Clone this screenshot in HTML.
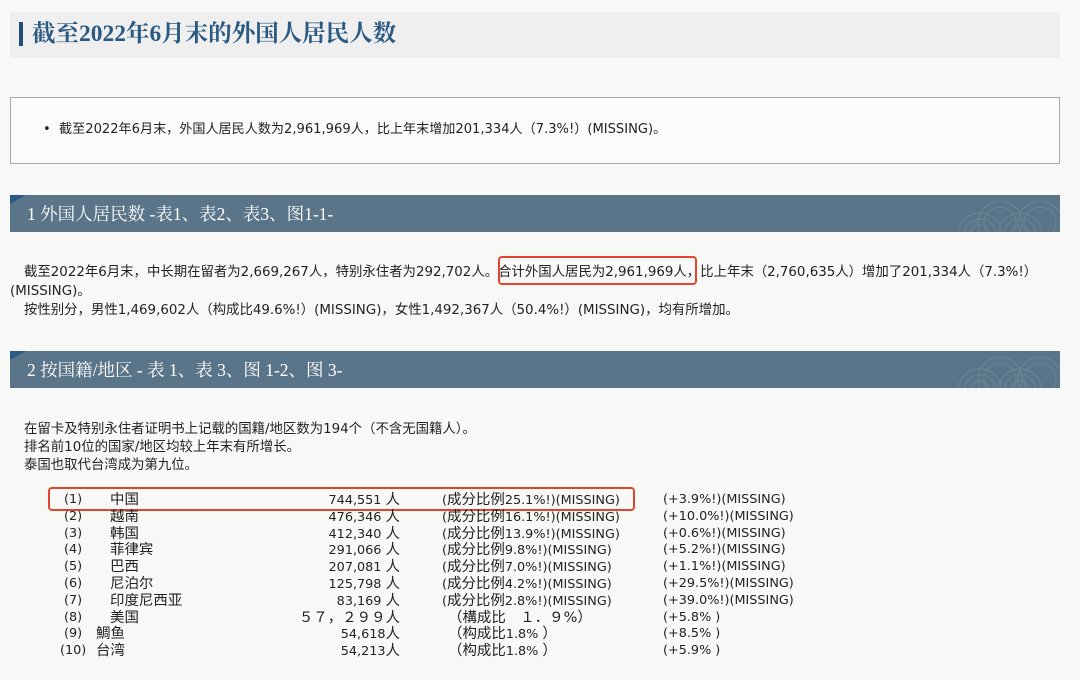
<!DOCTYPE html>
<html><head><meta charset="utf-8"><style>
*{margin:0;padding:0;box-sizing:border-box}
body{width:1080px;height:680px;background:#f8f8f7;position:relative;overflow:hidden;font-family:"DejaVu Sans","Noto Sans CJK SC",sans-serif;color:#222;font-size:12px}
.a{position:absolute;white-space:nowrap}
.title{left:10px;top:12px;width:1050px;height:46px;background:#efefef}
.title .bar{position:absolute;left:9px;top:10px;width:4px;height:24px;background:#1f4e79}
.title .t{position:absolute;left:22px;top:7px;font-family:"Liberation Serif","Noto Serif CJK SC",serif;font-size:23.5px;line-height:30px;color:#2a5a82;font-weight:bold}
.box{left:10px;top:97px;width:1050px;height:67px;border:1px solid #a8a8a8;background:#fbfbfb}
.sec{left:10px;width:1050px;height:37px;background:#5a7589;color:#fff;font-family:"Liberation Serif","Noto Serif CJK SC",serif;font-size:17.5px;line-height:22px;padding:8px 0 0 17px;overflow:hidden}
.sec:before{content:"";position:absolute;left:0;top:0;border-top:9px solid #2c5a85;border-right:16px solid transparent}
.p{font-size:13.4px;line-height:18px}
.red{position:absolute;border:2px solid #e0452f;border-radius:4px}
.r{position:absolute;font-size:12.8px;line-height:16px;white-space:nowrap}
i{font-style:normal;font-size:1.13em}
</style></head><body>
<div class="a title"><div class="bar"></div><div class="t">截至2022年6月末的外国人居民人数</div></div>
<div class="a box"></div>
<div class="a" style="left:43px;top:121px;font-size:13.1px;line-height:18px">•&nbsp;&nbsp;截至2022年6月末，外国人居民人数为2,961,969人，比上年末增加201,334人（7.3%!）(MISSING)。</div>

<div class="a sec" style="top:195px">1 外国人居民数 -表1、表2、表3、图1-1-
<svg style="position:absolute;right:0;top:0" width="110" height="37"><g fill="none" stroke="#6b8598" stroke-width="1"><circle cx="30" cy="40" r="22"/><circle cx="30" cy="40" r="16"/><circle cx="30" cy="40" r="10"/><circle cx="70" cy="40" r="22"/><circle cx="70" cy="40" r="16"/><circle cx="70" cy="40" r="10"/><circle cx="50" cy="28" r="22"/><circle cx="50" cy="28" r="16"/><circle cx="90" cy="28" r="22"/><circle cx="90" cy="28" r="16"/></g></svg></div>
<div class="a p" style="left:24px;top:264px">截至2022年6月末，中长期在留者为2,669,267人，特别永住者为292,702人。合计外国人居民为2,961,969人，比上年末（2,760,635人）增加了201,334人（7.3%!）</div>
<div class="a p" style="left:10px;top:283px">(MISSING)。</div>
<div class="a p" style="left:24px;top:302px">按性别分，男性1,469,602人（构成比49.6%!）(MISSING)，女性1,492,367人（50.4%!）(MISSING)，均有所增加。</div>
<div class="red" style="left:498px;top:256px;width:199px;height:29px"></div>

<div class="a sec" style="top:351px">2 按国籍/地区 - 表 1、表 3、图 1-2、图 3-
<svg style="position:absolute;right:0;top:0" width="110" height="37"><g fill="none" stroke="#6b8598" stroke-width="1"><circle cx="30" cy="40" r="22"/><circle cx="30" cy="40" r="16"/><circle cx="30" cy="40" r="10"/><circle cx="70" cy="40" r="22"/><circle cx="70" cy="40" r="16"/><circle cx="70" cy="40" r="10"/><circle cx="50" cy="28" r="22"/><circle cx="50" cy="28" r="16"/><circle cx="90" cy="28" r="22"/><circle cx="90" cy="28" r="16"/></g></svg></div>
<div class="a p" style="left:24px;top:421px">在留卡及特别永住者证明书上记载的国籍/地区数为194个（不含无国籍人）。</div>
<div class="a p" style="left:24px;top:439px">排名前10位的国家/地区均较上年末有所增长。</div>
<div class="a p" style="left:24px;top:457px">泰国也取代台湾成为第九位。</div>

<div class="red" style="left:48px;top:487px;width:587px;height:24px"></div>
<div class="r" style="left:64px;top:492px">(1)</div><div class="r" style="left:110px;top:492px"><i>中国</i></div><div class="r" style="left:280px;top:492px;width:120px;text-align:right">744,551 <i>人</i></div><div class="r" style="left:442px;top:492px">(<i>成分比例</i>25.1%!)(MISSING)</div><div class="r" style="left:663px;top:492px">(+3.9%!)(MISSING)</div>
<div class="r" style="left:64px;top:509px">(2)</div><div class="r" style="left:110px;top:509px"><i>越南</i></div><div class="r" style="left:280px;top:509px;width:120px;text-align:right">476,346 <i>人</i></div><div class="r" style="left:442px;top:509px">(<i>成分比例</i>16.1%!)(MISSING)</div><div class="r" style="left:663px;top:509px">(+10.0%!)(MISSING)</div>
<div class="r" style="left:64px;top:526px">(3)</div><div class="r" style="left:110px;top:526px"><i>韩国</i></div><div class="r" style="left:280px;top:526px;width:120px;text-align:right">412,340 <i>人</i></div><div class="r" style="left:442px;top:526px">(<i>成分比例</i>13.9%!)(MISSING)</div><div class="r" style="left:663px;top:526px">(+0.6%!)(MISSING)</div>
<div class="r" style="left:64px;top:542px">(4)</div><div class="r" style="left:110px;top:542px"><i>菲律宾</i></div><div class="r" style="left:280px;top:542px;width:120px;text-align:right">291,066 <i>人</i></div><div class="r" style="left:442px;top:542px">(<i>成分比例</i>9.8%!)(MISSING)</div><div class="r" style="left:663px;top:542px">(+5.2%!)(MISSING)</div>
<div class="r" style="left:64px;top:559px">(5)</div><div class="r" style="left:110px;top:559px"><i>巴西</i></div><div class="r" style="left:280px;top:559px;width:120px;text-align:right">207,081 <i>人</i></div><div class="r" style="left:442px;top:559px">(<i>成分比例</i>7.0%!)(MISSING)</div><div class="r" style="left:663px;top:559px">(+1.1%!)(MISSING)</div>
<div class="r" style="left:64px;top:576px">(6)</div><div class="r" style="left:110px;top:576px"><i>尼泊尔</i></div><div class="r" style="left:280px;top:576px;width:120px;text-align:right">125,798 <i>人</i></div><div class="r" style="left:442px;top:576px">(<i>成分比例</i>4.2%!)(MISSING)</div><div class="r" style="left:663px;top:576px">(+29.5%!)(MISSING)</div>
<div class="r" style="left:64px;top:593px">(7)</div><div class="r" style="left:110px;top:593px"><i>印度尼西亚</i></div><div class="r" style="left:280px;top:593px;width:120px;text-align:right">83,169 <i>人</i></div><div class="r" style="left:442px;top:593px">(<i>成分比例</i>2.8%!)(MISSING)</div><div class="r" style="left:663px;top:593px">(+39.0%!)(MISSING)</div>
<div class="r" style="left:64px;top:610px">(8)</div><div class="r" style="left:110px;top:610px"><i>美国</i></div><div class="r" style="left:250px;top:610px;width:150px;text-align:right"><i>５７，２９９人</i></div><div class="r" style="left:448px;top:610px"><i>（構成比　１．９%）</i></div><div class="r" style="left:663px;top:610px">(+5.8% )</div>
<div class="r" style="left:64px;top:626px">(9)</div><div class="r" style="left:96px;top:626px"><i>鯛鱼</i></div><div class="r" style="left:280px;top:626px;width:120px;text-align:right">54,618<i>人</i></div><div class="r" style="left:448px;top:626px"><i>（构成比</i>1.8% <i>）</i></div><div class="r" style="left:663px;top:626px">(+8.5% )</div>
<div class="r" style="left:60px;top:643px">(10)</div><div class="r" style="left:96px;top:643px"><i>台湾</i></div><div class="r" style="left:280px;top:643px;width:120px;text-align:right">54,213<i>人</i></div><div class="r" style="left:448px;top:643px"><i>（构成比</i>1.8% <i>）</i></div><div class="r" style="left:663px;top:643px">(+5.9% )</div>
</body></html>
